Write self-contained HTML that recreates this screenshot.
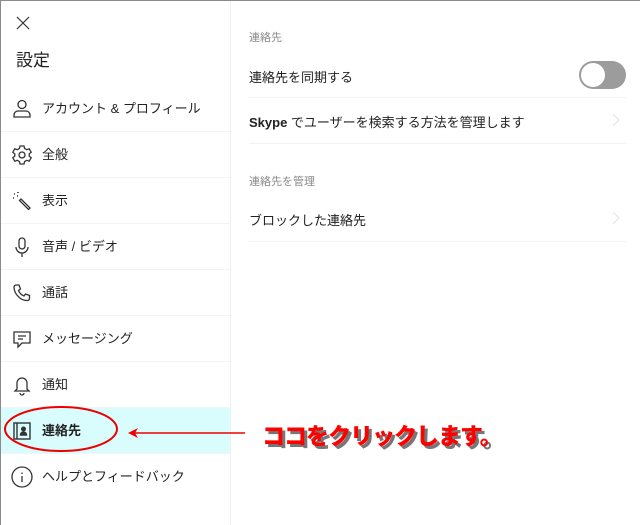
<!DOCTYPE html>
<html><head><meta charset="utf-8"><style>
*{margin:0;padding:0;box-sizing:border-box}
body{width:640px;height:525px;overflow:hidden;background:#fff;font-family:"Liberation Sans","Noto Sans CJK JP",sans-serif;color:#222;position:relative}
.frame{position:absolute;left:0;top:0;width:640px;height:525px;border-top:1px solid #8a8a8a;border-left:1px solid #8a8a8a}
.left{position:absolute;left:1px;top:1px;width:230px;height:524px;border-right:1px solid #eef1f4}
.x{position:absolute;left:15px;top:15px}
h1{position:absolute;left:15px;top:45px;font-size:17px;font-weight:normal;color:#222}
.item{position:absolute;left:0;width:229px;height:46px;border-bottom:1px solid #f1f4f8;font-size:13px}
.item span{position:absolute;left:41px;top:12px}
.item svg{position:absolute;left:10px;top:12px}
.sel{background:#d9fcfd}
.sub{position:absolute;left:249px;font-size:11px;color:#888}
.row{position:absolute;left:249px;width:377px;font-size:13px;border-bottom:1px solid #f0f2f4}
.chev{position:absolute;right:6px;top:15px}
.ann{position:absolute;left:262px;top:417px;font-size:23px;color:#f00;letter-spacing:-1px;text-shadow:3px 3px 0 #777;font-family:"Noto Sans CJK JP",sans-serif;font-weight:900}
</style></head><body>
<div class="frame"></div>
<div class="left">
<svg class="x" width="14" height="14" viewBox="0 0 14 14"><path d="M1 1L13 13M13 1L1 13" stroke="#333" stroke-width="1.2"/></svg>
<h1>設定</h1>
<div class="item" style="top:85px"><svg width="22" height="22" viewBox="0 0 22 22" fill="none" stroke="#333" stroke-width="1.3"><circle cx="11" cy="6.5" r="4"/><path d="M3 19v-2a4 4 0 0 1 4-4h8a4 4 0 0 1 4 4v2z"/></svg><span>アカウント &amp; プロフィール</span></div>
<div class="item" style="top:131px"><svg width="22" height="22" viewBox="0 0 22 22" fill="none" stroke="#333" stroke-width="1.3"><circle cx="11" cy="11" r="3"/><path d="M9 2h4l.6 2.5 2.2 1.2 2.4-.9 2 3.4-2 1.7v2.2l2 1.7-2 3.4-2.4-.9-2.2 1.2L13 20H9l-.6-2.5-2.2-1.2-2.4.9-2-3.4 2-1.700V9.9l-2-1.7 2-3.4 2.4.9 2.2-1.2z"/></svg><span>全般</span></div>
<div class="item" style="top:177px"><svg width="22" height="22" viewBox="0 0 22 22" fill="none" stroke="#333" stroke-width="1.3"><path d="M10 9l9 9-1.5 1.5-9-9z"/><path d="M3 4h1M7 2v1M2 8h1M6 6h1" stroke-width="1.6"/></svg><span>表示</span></div>
<div class="item" style="top:223px"><svg width="22" height="22" viewBox="0 0 22 22" fill="none" stroke="#333" stroke-width="1.3"><rect x="8" y="2" width="6" height="11" rx="3"/><path d="M5 11a6 6 0 0 0 12 0M11 17v4"/></svg><span>音声 / ビデオ</span></div>
<div class="item" style="top:269px"><svg width="22" height="22" viewBox="0 0 22 22" fill="none" stroke="#333" stroke-width="1.3"><path d="M5 3l3 0 1.5 4-2 1.5c1 2.5 3 4.5 5.5 5.5l1.5-2 4 1.5v3c0 1-1 2-2 2C10 19 3 12 3 5c0-1 1-2 2-2z"/></svg><span>通話</span></div>
<div class="item" style="top:315px"><svg width="22" height="22" viewBox="0 0 22 22" fill="none" stroke="#333" stroke-width="1.3"><path d="M3 4h16v11h-8l-4 4v-4H3z"/><path d="M7 8h8M7 11h5"/></svg><span>メッセージング</span></div>
<div class="item" style="top:361px"><svg width="22" height="22" viewBox="0 0 22 22" fill="none" stroke="#333" stroke-width="1.3"><path d="M6 15V9a5 5 0 0 1 10 0v6l2 2H4z"/><path d="M9 19a2 2 0 0 0 4 0"/></svg><span>通知</span></div>
<div class="item sel" style="top:407px"><svg width="22" height="22" viewBox="0 0 22 22" fill="none" stroke="#333" stroke-width="1.4"><rect x="3" y="3" width="16" height="16"/><path d="M6 3v16"/><circle cx="12.5" cy="9" r="1.8" fill="#333"/><path d="M9.5 15c0-2 1.5-3 3-3s3 1 3 3z" fill="#333"/></svg><span style="font-weight:bold">連絡先</span></div>
<div class="item" style="top:453px;border-bottom:none"><svg width="24" height="24" viewBox="0 0 24 24" fill="none" stroke="#333" stroke-width="1.3"><circle cx="11" cy="11" r="10"/><path d="M11 10v6M11 6.5v1.5"/></svg><span>ヘルプとフィードバック</span></div>
</div>
<div class="sub" style="top:29px">連絡先</div>
<div class="row" style="top:60px;height:38px"><span style="position:absolute;top:7px">連絡先を同期する</span>
<div style="position:absolute;left:330px;top:1px;width:47px;height:28px;border-radius:14px;background:#9c9c9c"><div style="position:absolute;left:2px;top:2px;width:24px;height:24px;border-radius:12px;background:#fff"></div></div></div>
<div class="row" style="top:98px;height:46px"><span style="position:absolute;top:14px"><b>Skype</b> でユーザーを検索する方法を管理します</span><svg class="chev" width="8" height="14" viewBox="0 0 8 14"><path d="M1 1l6 6-6 6" fill="none" stroke="#e4e4e4"/></svg></div>
<div class="sub" style="top:173px">連絡先を管理</div>
<div class="row" style="top:196px;height:46px"><span style="position:absolute;top:14px">ブロックした連絡先</span><svg class="chev" width="8" height="14" viewBox="0 0 8 14"><path d="M1 1l6 6-6 6" fill="none" stroke="#e4e4e4"/></svg></div>
<svg style="position:absolute;left:0;top:0" width="640" height="525"><ellipse cx="61" cy="429" rx="56" ry="22" fill="none" stroke="#e00" stroke-width="2"/><path d="M245 433H132" stroke="#e00" stroke-width="1.5"/><path d="M128 433l10-5-3 5 3 5z" fill="#e00"/></svg>
<div class="ann">ココをクリックします。</div>
</body></html>
